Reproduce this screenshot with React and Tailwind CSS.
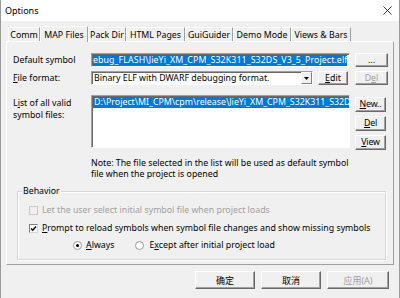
import React from 'react';

const font = "font-['Noto_Sans','Noto_Sans_CJK_SC',sans-serif]";

const Btn = ({ children, className = '', disabled = false }) => (
  <div
    className={`flex items-center justify-center bg-[#f0f0f0] border border-t-white border-l-white border-r-[#696969] border-b-[#696969] shadow-[inset_-1px_-1px_0_#a0a0a0] leading-none whitespace-nowrap ${disabled ? 'text-[#a0a0a0]' : 'text-black'} ${className}`}
  >
    {children}
  </div>
);

const Sunken = ({ children, className = '' }) => (
  <div className={`bg-white border border-t-[#a0a0a0] border-l-[#a0a0a0] border-r-white border-b-white shadow-[inset_1px_1px_0_#696969] overflow-hidden ${className}`}>
    {children}
  </div>
);

const tabs = [
  { label: 'Comm', w: 'w-[32px]' },
  { label: 'MAP Files', w: 'w-[48px]', active: true },
  { label: 'Pack Dir', w: 'w-[38px]' },
  { label: 'HTML Pages', w: 'w-[59px]' },
  { label: 'GuiGuider', w: 'w-[48px]' },
  { label: 'Demo Mode', w: 'w-[58px]' },
  { label: 'Views & Bars', w: 'w-[60px]' },
];

const Check = ({ checked, disabled }) => (
  <div className={`w-[9px] h-[9px] flex items-center justify-center border ${disabled ? 'border-[#c8c8c8] bg-[#f0f0f0]' : 'border-t-[#808080] border-l-[#808080] border-r-[#d8d8d8] border-b-[#d8d8d8] bg-white'}`}>
    {checked && (
      <svg width="7" height="7" viewBox="0 0 7 7">
        <path d="M1 3.5 L2.8 5.3 L6 1.5" fill="none" stroke="#000" strokeWidth="1.4" />
      </svg>
    )}
  </div>
);

const Radio = ({ checked }) => (
  <div className="w-[9px] h-[9px] rounded-full border border-[#9a9a9a] bg-white flex items-center justify-center">
    {checked && <div className="w-[3px] h-[3px] rounded-full bg-black" />}
  </div>
);

export default function App() {
  return (
    <div className={`w-[400px] h-[298px] bg-[#f0f0f0] border-x border-[#9a9a9a] flex flex-col text-[8.8px] text-black overflow-hidden ${font}`}>
      {/* title bar */}
      <div className="h-[21px] bg-white flex items-center justify-between pl-[4px] pr-[7px] shrink-0">
        <span className="text-[9px] leading-none">Options</span>
        <svg width="9" height="9" viewBox="0 0 9 9">
          <path d="M0.5 0.5 L8.5 8.5 M8.5 0.5 L0.5 8.5" stroke="#222" strokeWidth="0.9" />
        </svg>
      </div>

      {/* tabs */}
      <div className="flex items-end h-[20px] pl-[7px] shrink-0">
        {tabs.map((t) => (
          <div
            key={t.label}
            className={`${t.w} flex items-center justify-center whitespace-nowrap leading-none bg-[#f0f0f0] border-t border-l border-t-white border-l-white border-r border-r-[#a0a0a0] ${
              t.active ? 'relative z-10 h-[16px] -mb-px pt-[1px]' : 'h-[14px] pt-[1px]'
            }`}
          >
            {t.label}
          </div>
        ))}
      </div>

      {/* panel */}
      <div className="mx-[5px] h-[224px] shrink-0 border border-t-white border-l-white border-r-[#a0a0a0] border-b-[#a0a0a0] pl-[6px]">
        <div className="flex items-center mt-[11px] h-[14px]">
          <div className="w-[78px] leading-none">Default symbol</div>
          <Sunken className="w-[259px] h-[14px] flex items-center pl-[1px]">
            <span className="bg-[#0078d7] text-white whitespace-nowrap leading-[11px] tracking-[0.1px]">
              ebug_FLASH\JieYi_XM_CPM_S32K311_S32DS_V3_5_Project.elf
            </span>
          </Sunken>
          <Btn className="ml-[5px] w-[33px] h-[14px]">...</Btn>
        </div>

        <div className="flex items-center mt-[4px] h-[14px]">
          <div className="w-[78px] leading-none pt-[1px]">
            <u className="underline-offset-1">F</u>ile format:
          </div>
          <Sunken className="w-[222px] h-[14px] flex items-center justify-between pl-[2px]">
            <span className="whitespace-nowrap leading-none">Binary ELF with DWARF debugging format.</span>
            <div className="w-[11px] h-[12px] flex items-center justify-center bg-[#f0f0f0] border border-t-white border-l-white border-r-[#808080] border-b-[#808080]">
              <svg width="5" height="3" viewBox="0 0 5 3">
                <path d="M0 0 H5 L2.5 3 Z" fill="#000" />
              </svg>
            </div>
          </Sunken>
          <Btn className="ml-[5px] w-[30px] h-[14px]">
            <u className="underline-offset-1">E</u>dit
          </Btn>
          <Btn disabled className="ml-[7px] w-[33px] h-[14px]">
            D<u className="underline-offset-1">e</u>l
          </Btn>
        </div>

        <div className="flex items-start mt-[10px] h-[55px]">
          <div className="w-[78px] leading-[12px] pt-[2px]">
            L<u className="underline-offset-1">i</u>st of all valid
            <br />
            symbol files:
          </div>
          <Sunken className="w-[259px] h-[53px] pt-[1px] pl-[1px]">
            <div className="bg-[#0078d7] text-white whitespace-nowrap leading-[11px] pl-[1px] overflow-hidden">
              D:\Project\MI_CPM\cpm\release\JieYi_XM_CPM_S32K311_S32DS_V3_5
            </div>
          </Sunken>
          <div className="ml-[5px] flex flex-col gap-[4px] pt-[2px] tracking-[-0.2px]">
            <Btn className="w-[31px] h-[15px]">
              <u className="underline-offset-1">N</u>ew..
            </Btn>
            <Btn className="w-[31px] h-[15px]">
              <u className="underline-offset-1">D</u>el
            </Btn>
            <Btn className="w-[31px] h-[15px]">
              <u className="underline-offset-1">V</u>iew
            </Btn>
          </div>
        </div>

        <div className="mt-[8px] pl-[78px] leading-[11px]">
          Note: The file selected in the list will be used as default symbol
          <br />
          file when the project is opened
        </div>

        {/* Behavior group */}
        <div className="relative mt-[11px] ml-[4px] w-[369px] h-[69px] border border-[#d5d5d5] shadow-[1px_1px_0_#fff,inset_1px_1px_0_#fff] pt-[12px]">
          <span className="absolute top-[-6px] left-[4px] px-[1px] bg-[#f0f0f0] leading-[11px]">Behavior</span>
          <div className="flex items-center h-[12px] pl-[11px] gap-[4px] text-[#a0a0a0]">
            <Check disabled />
            <span className="whitespace-nowrap leading-none">
              Let the user select initial symbol file when project loads
            </span>
          </div>
          <div className="flex items-center h-[12px] mt-[6px] pl-[11px] gap-[4px]">
            <Check checked />
            <span className="whitespace-nowrap leading-none">
              <u className="underline-offset-1">P</u>rompt to reload symbols when symbol file changes and show missing symbols
            </span>
          </div>
          <div className="flex items-center h-[12px] mt-[5px] pl-[55px]">
            <Radio checked />
            <span className="ml-[4px] leading-none">
              <u className="underline-offset-1">A</u>lways
            </span>
            <div className="ml-[21px]">
              <Radio />
            </div>
            <span className="ml-[5px] leading-none whitespace-nowrap">
              E<u className="underline-offset-1">x</u>cept after initial project load
            </span>
          </div>
        </div>
      </div>

      {/* bottom buttons */}
      <div className="flex justify-end gap-[6px] pr-[10px] mt-[6px] text-[9px]">
        <Btn className="w-[60px] h-[18px]">确定</Btn>
        <Btn className="w-[60px] h-[18px]">取消</Btn>
        <Btn disabled className="w-[62px] h-[18px]">应用(A)</Btn>
      </div>
    </div>
  );
}
